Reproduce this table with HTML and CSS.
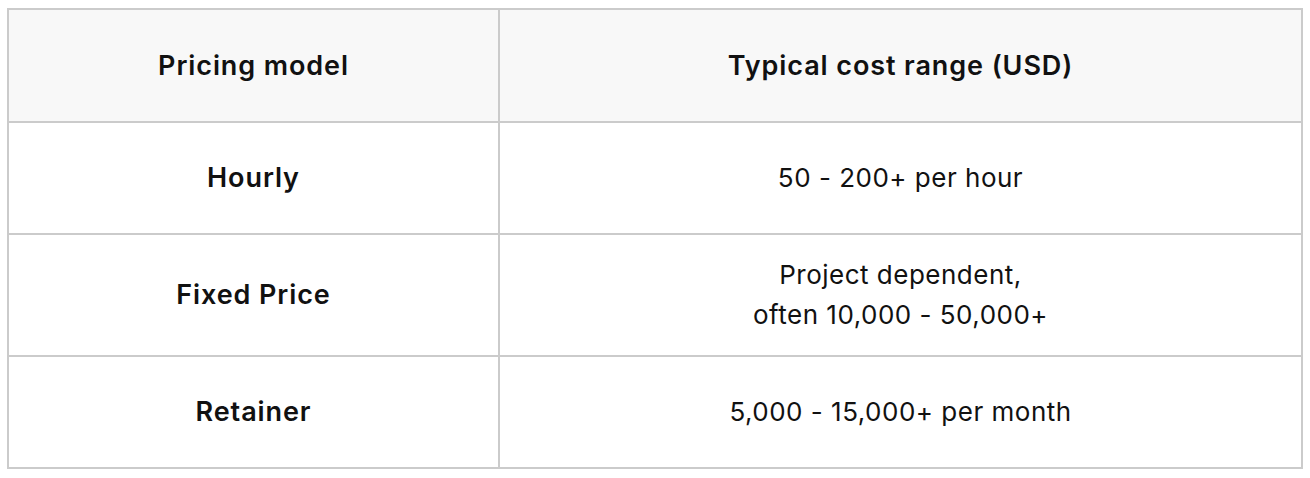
FILE: index.html
```html
<!DOCTYPE html>
<html>
<head>
<meta charset="utf-8">
<link rel="stylesheet" href="styles.css">
</head>
<body>
<table class="pricing">
  <colgroup>
    <col class="col-model">
    <col class="col-cost">
  </colgroup>
  <thead>
    <tr>
      <th>Pricing model</th>
      <th>Typical cost range (USD)</th>
    </tr>
  </thead>
  <tbody>
    <tr>
      <td class="model">Hourly</td>
      <td class="cost">50 - 200+ per hour</td>
    </tr>
    <tr>
      <td class="model">Fixed Price</td>
      <td class="cost">Project dependent,<br>often 10,000 - 50,000+</td>
    </tr>
    <tr>
      <td class="model">Retainer</td>
      <td class="cost">5,000 - 15,000+ per month</td>
    </tr>
  </tbody>
</table>
</body>
</html>
```
FILE: styles.css
```css
html, body {
  margin: 0;
  padding: 0;
  background: #ffffff;
}
body {
  padding: 8px 7px;
  font-family: Inter, "Noto Sans", sans-serif;
  color: #111111;
}
.pricing {
  width: 1296px;
  border-collapse: collapse;
  table-layout: fixed;
}
.col-model { width: 491px; }
.pricing th,
.pricing td {
  border: 2px solid #cbcbcb;
  text-align: center;
  vertical-align: middle;
  font-size: 26px;
  line-height: 40px;
  padding: 20px 16px;
  letter-spacing: 0.5px;
}
.pricing thead th {
  background: #f8f8f8;
  font-weight: 600;
  height: 71px;
  font-size: 27px;
  letter-spacing: 0.9px;
}
.pricing td { height: 70px; }
.pricing td.model {
  font-weight: 600;
  font-size: 27px;
  letter-spacing: 0.9px;
}
.pricing td.cost { font-weight: 400; }
```
